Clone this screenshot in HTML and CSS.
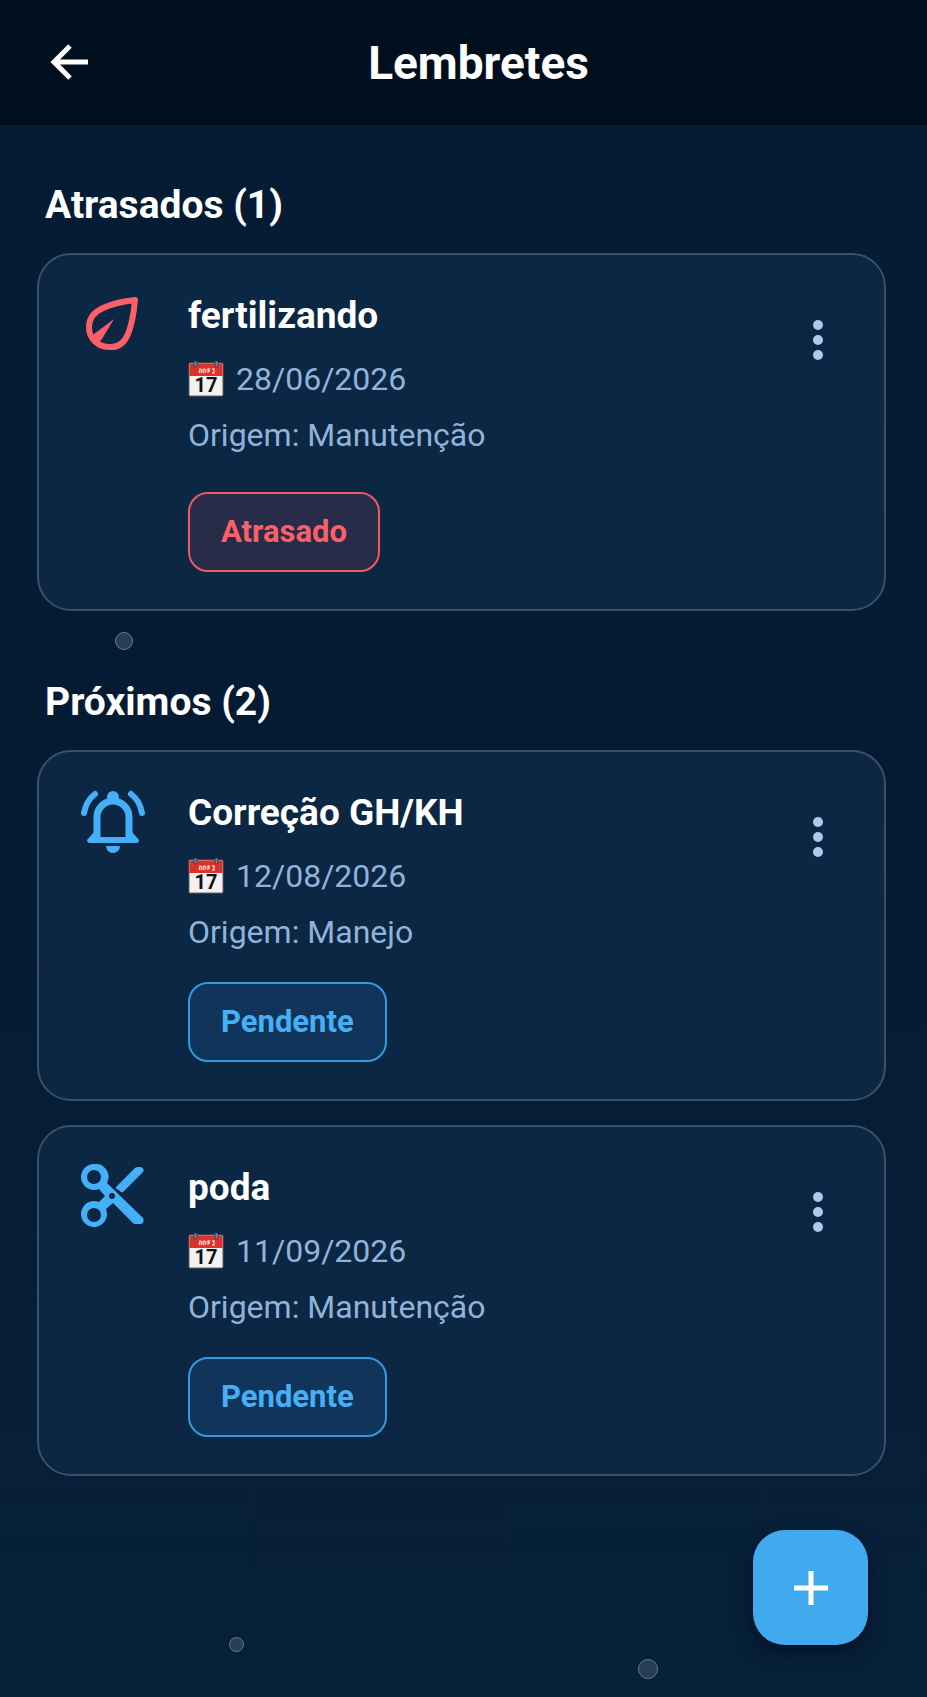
FILE: index.html
```html
<!DOCTYPE html>
<html lang="pt-BR">
<head>
  <meta charset="UTF-8">
  <meta name="viewport" content="width=device-width, initial-scale=1.0">
  <title>Lembretes</title>
  <link rel="stylesheet" href="styles.css">
</head>
<body>
  <!-- shared icons -->
  <svg class="sprite" aria-hidden="true">
    <symbol id="icon-calendar" viewBox="0 0 36 36">
      <rect x="1" y="2" width="34" height="33" rx="1" fill="#f4f2f1" stroke="#6b5a5c" stroke-width="1"/>
      <path d="M1.500 2.500h33v12.500h-33z" fill="#e0302a"/>
      <path d="M11 12l1-4 2 1-1 3m2 0l1-4 2 1-1 3m3 0l0-4 2 0m-2 2h2m2 2h2l0-4h-2" fill="none" stroke="#f7cfcb" stroke-width="1.300"/>
      <rect x="6" y="0" width="3" height="6" rx="1" fill="#6d8798" stroke="#33424e" stroke-width="1"/>
      <rect x="27" y="0" width="3" height="6" rx="1" fill="#6d8798" stroke="#33424e" stroke-width="1"/>
    </symbol>
    <symbol id="icon-dots" viewBox="0 0 40 40">
      <circle cx="20" cy="5" r="5"/>
      <circle cx="20" cy="20" r="5"/>
      <circle cx="20" cy="35" r="5"/>
    </symbol>
  </svg>

  <span class="bubble bubble-1"></span>
  <span class="bubble bubble-2"></span>
  <span class="bubble bubble-3"></span>

  <header class="top-bar">
    <button type="button" class="icon-button" aria-label="Voltar">
      <svg width="38" height="38" viewBox="0 0 38 38" fill="none" stroke="#fff" stroke-width="5">
        <path d="M20 2L4 18l16 16M4 18h34"/>
      </svg>
    </button>
    <h1>Lembretes</h1>
  </header>

  <main class="content">
    <section class="group">
      <h2>Atrasados (1)</h2>
      <article class="card card-late">
        <svg class="card-icon" viewBox="0 0 64 64" fill="none" stroke="currentColor" stroke-width="6" stroke-linejoin="round">
          <path d="M54 8Q35 10 22 16C11 21 8 28 8 35C8 47 17 55 29 55Q41 56 47 42Q52 30 54 8Z"/>
          <path d="M33 27L13 42Q10 46 13 50Q16 53 21 47Z" fill="currentColor" stroke="none"/>
        </svg>
        <div class="card-body">
          <h3>fertilizando</h3>
          <p class="date">
            <svg class="calendar" viewBox="0 0 36 36"><use href="#icon-calendar"/><text x="18" y="31" text-anchor="middle">17</text></svg>
            28/06/2026
          </p>
          <p>Origem: Manutenção</p>
          <span class="badge">Atrasado</span>
        </div>
        <button type="button" class="icon-button menu" aria-label="Opções de fertilizando">
          <svg width="40" height="40"><use href="#icon-dots"/></svg>
        </button>
      </article>
    </section>

    <section class="group">
      <h2>Próximos (2)</h2>
      <article class="card">
        <svg class="card-icon" viewBox="0 0 64 64" fill="none" stroke="currentColor" stroke-width="7" stroke-linecap="round" stroke-linejoin="round">
          <path d="M16 50V28A16 16 0 0 1 48 28V50"/>
          <path d="M13 43L6 51Q6 54 9 54H55Q58 54 58 51L51 43V47L48 48H16Z" fill="currentColor" stroke="none"/>
          <circle cx="32" cy="8" r="6" fill="currentColor" stroke="none"/>
          <path d="M25 57H39A7 7 0 0 1 25 57Z" fill="currentColor" stroke="none"/>
          <path d="M14 5Q5 12 3 24M50 5Q59 12 61 24" stroke-width="6"/>
        </svg>
        <div class="card-body">
          <h3>Correção GH/KH</h3>
          <p class="date">
            <svg class="calendar" viewBox="0 0 36 36"><use href="#icon-calendar"/><text x="18" y="31" text-anchor="middle">17</text></svg>
            12/08/2026
          </p>
          <p>Origem: Manejo</p>
          <span class="badge">Pendente</span>
        </div>
        <button type="button" class="icon-button menu" aria-label="Opções de Correção GH/KH">
          <svg width="40" height="40"><use href="#icon-dots"/></svg>
        </button>
      </article>

      <article class="card">
        <svg class="card-icon" viewBox="0 0 64 64" fill="currentColor">
          <path fill-rule="evenodd" d="M13 0a13 13 0 1 0 5 25L24 32L18 38a13 13 0 1 0 7 7L32 39L53 60H60Q64 58 62 54L26 19A13 13 0 0 0 13 0zM13 6a7 7 0 1 1 0 14a7 7 0 0 1 0-14zM13 44a7 7 0 1 1 0 14a7 7 0 0 1 0-14zM31 29a3 3 0 1 1 0 6a3 3 0 0 1 0-6z"/>
          <path d="M35 23L54 4Q55 3 57 3H60Q64 5 62 8L42 28Q40 29 39 27L36 25Q34 24 35 23Z"/>
        </svg>
        <div class="card-body">
          <h3>poda</h3>
          <p class="date">
            <svg class="calendar" viewBox="0 0 36 36"><use href="#icon-calendar"/><text x="18" y="31" text-anchor="middle">17</text></svg>
            11/09/2026
          </p>
          <p>Origem: Manutenção</p>
          <span class="badge">Pendente</span>
        </div>
        <button type="button" class="icon-button menu" aria-label="Opções de poda">
          <svg width="40" height="40"><use href="#icon-dots"/></svg>
        </button>
      </article>
    </section>
  </main>

  <button type="button" class="add-button" aria-label="Novo lembrete">
    <svg width="34" height="34" viewBox="0 0 34 34" fill="none" stroke="#fff" stroke-width="5">
      <path d="M17 0v34M0 17h34"/>
    </svg>
  </button>
</body>
</html>
```

FILE: styles.css
```css
* {
  box-sizing: border-box;
}

body {
  position: relative;
  min-height: 100vh;
  margin: 0;
  background: linear-gradient(#061c35, #051b33 45%, #07203a);
  color: #fff;
  font-family: Roboto, "Liberation Sans", sans-serif;
}

h1, h2, h3, p {
  margin: 0;
}

.sprite {
  position: absolute;
  width: 0;
  height: 0;
}

.icon-button {
  display: flex;
  align-items: center;
  justify-content: center;
  padding: 0;
  border: none;
  background: none;
  cursor: pointer;
}

/* header */
.top-bar {
  display: grid;
  grid-template-columns: 38px 1fr;
  align-items: center;
  height: 125px;
  padding: 0 58px 0 50px;
  background: #000f1d;
}

.top-bar h1 {
  font-size: 46px;
  font-weight: 700;
  line-height: 56px;
  text-align: center;
}

/* lists */
.content {
  padding: 57px 41px 0 37px;
}

.group {
  display: flex;
  flex-direction: column;
  gap: 24px;
  margin-bottom: 68px;
}

.group h2 {
  padding-left: 8px;
  font-size: 39px;
  font-weight: 700;
  line-height: 47px;
}

.card {
  display: flex;
  align-items: flex-start;
  padding: 37px 46px 37px 42px;
  border: 2px solid #3b5066;
  border-radius: 34px;
  background: #0b2744;
  color: #45b0f8;
}

.card-late {
  color: #fb5f68;
}

.card-icon {
  flex: none;
  width: 64px;
  height: 64px;
}

.card-body {
  flex: 1;
  padding-left: 43px;
}

.card-body h3 {
  margin-bottom: 12px;
  color: #fff;
  font-size: 37px;
  font-weight: 700;
  line-height: 47px;
}

.card-body p {
  color: #91b3d9;
  font-size: 32px;
  line-height: 56px;
}

.card-body .date {
  display: flex;
  align-items: center;
}

.calendar {
  width: 36px;
  height: 36px;
  margin-right: 12px;
}

.calendar text {
  fill: #111;
  font-size: 20px;
  font-weight: 700;
}

.badge {
  display: inline-block;
  margin-top: 22px;
  padding: 0 31px;
  border: 2px solid #319bdd;
  border-radius: 20px;
  background: #11355a;
  font-size: 31px;
  font-weight: 700;
  line-height: 76px;
}

.card-late .badge {
  margin-top: 29px;
  border-color: #ec5963;
  background: #282c48;
}

.menu {
  width: 40px;
  height: 40px;
  margin-top: 28px;
  fill: #a9cbf0;
}

/* floating action */
.add-button {
  position: absolute;
  right: 59px;
  bottom: 52px;
  display: flex;
  align-items: center;
  justify-content: center;
  width: 115px;
  height: 115px;
  padding: 0;
  border: none;
  border-radius: 32px;
  background: #41a9ed;
  box-shadow: 0 8px 16px rgba(0, 8, 20, 0.5);
  cursor: pointer;
}

/* background bubbles */
.bubble {
  position: absolute;
  width: 18px;
  height: 18px;
  border: 1px solid #66788b;
  border-radius: 50%;
  background: #283e56;
}

.bubble-1 {
  top: 632px;
  left: 115px;
}

.bubble-2 {
  top: 1637px;
  left: 229px;
  width: 15px;
  height: 15px;
}

.bubble-3 {
  top: 1659px;
  left: 638px;
  width: 20px;
  height: 20px;
}
```
